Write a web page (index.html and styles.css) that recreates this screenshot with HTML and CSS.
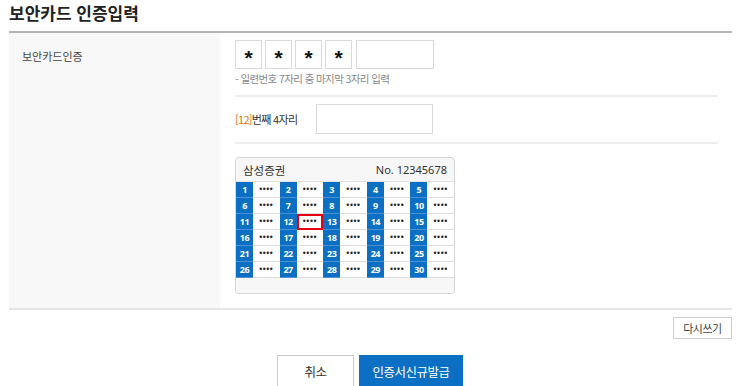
FILE: index.html
```html
<!DOCTYPE html>
<html lang="ko">
<head>
<meta charset="utf-8">
<title>보안카드 인증입력</title>
<link rel="stylesheet" href="styles.css">
</head>
<body>
<div class="page">
  <h1 class="title">보안카드 인증입력</h1>
  <div class="form-row">
    <div class="label-col"><span class="label">보안카드인증</span></div>
    <div class="field-col">
      <div class="serial">
        <span class="digit">*</span>
        <span class="digit">*</span>
        <span class="digit">*</span>
        <span class="digit">*</span>
        <span class="digit-input"></span>
      </div>
      <p class="hint">- 일련번호 7자리 중 마지막 3자리 입력</p>
      <div class="divider"></div>
      <div class="code-row">
        <span class="code-label"><em class="code-no">[12]</em>번째 4자리</span>
        <span class="code-input"></span>
      </div>
      <div class="divider"></div>
      <div class="card">
        <div class="card-head">
          <span class="card-name">삼성증권</span>
          <span class="card-serial">No. 12345678</span>
        </div>
        <div class="card-grid">
          <span class="num">1</span><span class="val">••••</span>
          <span class="num">2</span><span class="val">••••</span>
          <span class="num">3</span><span class="val">••••</span>
          <span class="num">4</span><span class="val">••••</span>
          <span class="num">5</span><span class="val">••••</span>
          <span class="num">6</span><span class="val">••••</span>
          <span class="num">7</span><span class="val">••••</span>
          <span class="num">8</span><span class="val">••••</span>
          <span class="num">9</span><span class="val">••••</span>
          <span class="num">10</span><span class="val">••••</span>
          <span class="num">11</span><span class="val">••••</span>
          <span class="num">12</span><span class="val selected">••••</span>
          <span class="num">13</span><span class="val">••••</span>
          <span class="num">14</span><span class="val">••••</span>
          <span class="num">15</span><span class="val">••••</span>
          <span class="num">16</span><span class="val">••••</span>
          <span class="num">17</span><span class="val">••••</span>
          <span class="num">18</span><span class="val">••••</span>
          <span class="num">19</span><span class="val">••••</span>
          <span class="num">20</span><span class="val">••••</span>
          <span class="num">21</span><span class="val">••••</span>
          <span class="num">22</span><span class="val">••••</span>
          <span class="num">23</span><span class="val">••••</span>
          <span class="num">24</span><span class="val">••••</span>
          <span class="num">25</span><span class="val">••••</span>
          <span class="num">26</span><span class="val">••••</span>
          <span class="num">27</span><span class="val">••••</span>
          <span class="num">28</span><span class="val">••••</span>
          <span class="num">29</span><span class="val">••••</span>
          <span class="num">30</span><span class="val">••••</span>
        </div>
        <div class="card-foot"></div>
      </div>
    </div>
  </div>
  <div class="reset-row"><button class="btn-reset" type="button">다시쓰기</button></div>
  <div class="actions">
    <button class="btn btn-cancel" type="button">취소</button>
    <button class="btn btn-primary" type="button">인증서신규발급</button>
  </div>
</div>
</body>
</html>
```

FILE: styles.css
```css
* { box-sizing: border-box; }

html, body {
  margin: 0;
  padding: 0;
  background: #fff;
}

body {
  font-family: "Noto Sans CJK KR", "Noto Sans", sans-serif;
  color: #333;
  width: 740px;
  height: 386px;
  overflow: hidden;
}

.page {
  width: 723px;
  margin-left: 9px;
}

.title {
  margin: 0;
  height: 33px;
  font-size: 17px;
  line-height: 26px;
  font-weight: 700;
  color: #222;
  letter-spacing: 0;
  border-bottom: 2px solid #b4b4b4;
}

.form-row {
  display: flex;
  border-bottom: 2px solid #e6e6e6;
}

.label-col {
  width: 211px;
  background: #f8f8f8;
  padding: 16px 0 0 13px;
}

.label {
  display: block;
  font-size: 11px;
  line-height: 14px;
  letter-spacing: 0;
  color: #444;
}

.field-col {
  flex: 1;
  padding: 7px 14px 14px 15px;
}

.serial {
  display: flex;
  gap: 3px;
}

.digit {
  width: 27px;
  height: 29px;
  border: 1px solid #d9d9d9;
  background: #fff;
  display: flex;
  align-items: center;
  justify-content: center;
  font-family: "Liberation Sans", sans-serif;
  font-size: 21px;
  font-weight: 700;
  color: #111;
  padding-top: 6px;
}

.digit-input {
  width: 78px;
  height: 29px;
  margin-left: 1px;
  border: 1px solid #d9d9d9;
  background: #fff;
}

.hint {
  margin: 3px 0 0;
  font-size: 10.5px;
  line-height: 14px;
  letter-spacing: -0.6px;
  color: #888;
}

.divider {
  height: 2px;
  background: #eeeeee;
  margin-top: 9px;
}

.code-row {
  display: flex;
  align-items: center;
  margin-top: 7px;
}

.code-label {
  width: 81px;
  font-size: 11px;
  letter-spacing: -0.7px;
  color: #333;
}

.code-no {
  font-style: normal;
  color: #d9730d;
}

.code-input {
  width: 117px;
  height: 30px;
  border: 1px solid #d9d9d9;
  background: #fff;
}

.code-row + .divider {
  margin-top: 8px;
}

.card {
  width: 220px;
  margin-top: 13px;
  border: 1px solid #d6d6d6;
  border-radius: 4px;
  background: #f7f7f7;
  overflow: hidden;
}

.card-head {
  height: 24px;
  display: flex;
  align-items: center;
  justify-content: space-between;
  padding: 0 7px;
  border-bottom: 1px solid #e2e2e2;
  font-size: 11px;
  color: #333;
}

.card-name {
  font-size: 11.5px;
  letter-spacing: 0;
}

.card-serial {
  font-family: "Noto Sans", sans-serif;
  letter-spacing: 0;
}

.card-grid {
  display: grid;
  grid-template-columns: repeat(5, 17px 1fr);
  grid-auto-rows: 16px;
  background: #fff;
}

.num {
  background: #0b6fc3;
  color: #fff;
  font-family: "Noto Sans", sans-serif;
  font-weight: 700;
  font-size: 9px;
  line-height: 15px;
  text-align: center;
  letter-spacing: -0.5px;
  border-bottom: 1px solid #4a92d4;
}

.val {
  background: #fff;
  color: #222;
  font-family: "Liberation Sans", sans-serif;
  font-size: 8.5px;
  line-height: 15px;
  text-align: center;
  letter-spacing: 0.6px;
  border-bottom: 1px solid #dcdcdc;
}

.val.selected {
  outline: 2px solid #e60012;
  outline-offset: -2px;
}

.card-foot {
  height: 15px;
  background: #f7f7f7;
}

.reset-row {
  display: flex;
  justify-content: flex-end;
  margin-top: 7px;
}

.btn-reset {
  width: 59px;
  height: 22px;
  border: 1px solid #cccccc;
  background: #fff;
  font-family: "Noto Sans CJK KR", sans-serif;
  font-size: 11px;
  letter-spacing: -0.5px;
  color: #444;
  padding: 0;
}

.actions {
  display: flex;
  justify-content: center;
  gap: 5px;
  margin-top: 16px;
  margin-left: -9px;
  width: 740px;
}

.btn {
  height: 33px;
  padding: 0;
  font-family: "Noto Sans CJK KR", sans-serif;
  font-size: 12.5px;
  letter-spacing: -0.5px;
  border: 1px solid #c8c8c8;
}

.btn-cancel {
  width: 77px;
  background: #fff;
  color: #333;
}

.btn-primary {
  width: 104px;
  background: #0b6fc3;
  border-color: #0b6fc3;
  color: #fff;
}
```
